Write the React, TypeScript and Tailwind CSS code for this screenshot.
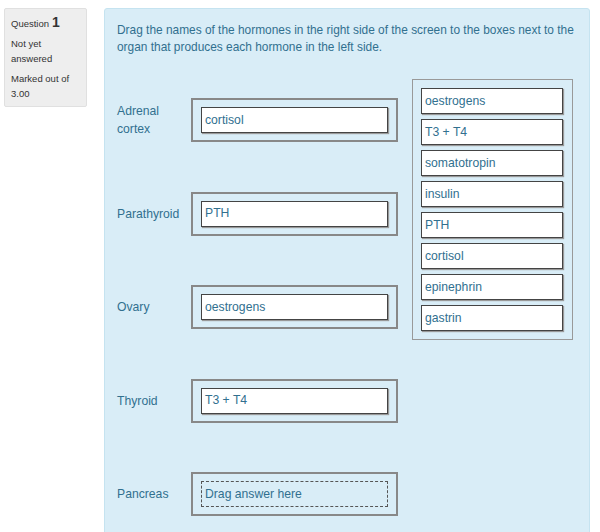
const drops = [
  { label: 'Adrenal cortex', value: 'cortisol' },
  { label: 'Parathyroid', value: 'PTH' },
  { label: 'Ovary', value: 'oestrogens' },
  { label: 'Thyroid', value: 'T3 + T4' },
  { label: 'Pancreas', value: '' },
];

const choices = ['oestrogens', 'T3 + T4', 'somatotropin', 'insulin', 'PTH', 'cortisol', 'epinephrin', 'gastrin'];

export default function App() {
  return (
    <div
      className="flex h-[532px] w-[600px] items-start overflow-hidden bg-white pl-[4px] pt-[8px]"
      style={{ fontFamily: '"Liberation Sans", Arial, sans-serif' }}
    >
      {/* question info */}
      <div className="w-[83px] shrink-0 rounded-[2px] border border-[#e0e0e0] bg-[#eeeeee] px-[6px] pb-[5px] pt-[6px] text-[9.5px] leading-[15px] text-[#333]">
        <div className="flex items-baseline gap-[3px]">
          <span>Question</span>
          <span className="text-[14px] font-bold leading-[15px]">1</span>
        </div>
        <div className="mt-[5px]">Not yet answered</div>
        <div className="mt-[5px]">Marked out of 3.00</div>
      </div>

      {/* formulation */}
      <div className="ml-[17px] h-[540px] w-[486px] shrink-0 rounded-[3px] border border-[#c5e3f0] bg-[#d9edf7] pl-[12px] pr-[6px] pt-[13px] text-[12.2px] text-[#31708f]">
        <p className="text-[11.9px] leading-[17px]">
          Drag the names of the hormones in the right side of the screen to the boxes next to the organ that produces each hormone in the left side.
        </p>

        <div className="mt-[23px] flex">
          <div className="mt-[19px] flex flex-col gap-[49.5px]">
            {drops.map((d) => (
              <div key={d.label} className="flex items-center">
                <div className="w-[74px] leading-[18px]">{d.label}</div>
                <div className="border-2 border-[#888] px-[8px] py-[7px]">
                  {d.value ? (
                    <div className="flex h-[26px] w-[187px] items-center border border-[#444] bg-white pl-[3px] shadow-[1px_1px_1px_#999]">
                      {d.value}
                    </div>
                  ) : (
                    <div className="flex h-[26px] w-[187px] items-center border border-dashed border-[#555] pl-[3px]">
                      Drag answer here
                    </div>
                  )}
                </div>
              </div>
            ))}
          </div>

          <div className="ml-[14px] flex h-[261px] w-[161px] flex-col gap-[5px] border border-[#999] p-[8px]">
            {choices.map((c) => (
              <div
                key={c}
                className="flex h-[26px] w-[142px] items-center border border-[#444] bg-white pl-[3px] shadow-[1px_1px_1px_#999]"
              >
                {c}
              </div>
            ))}
          </div>
        </div>
      </div>
    </div>
  );
}
